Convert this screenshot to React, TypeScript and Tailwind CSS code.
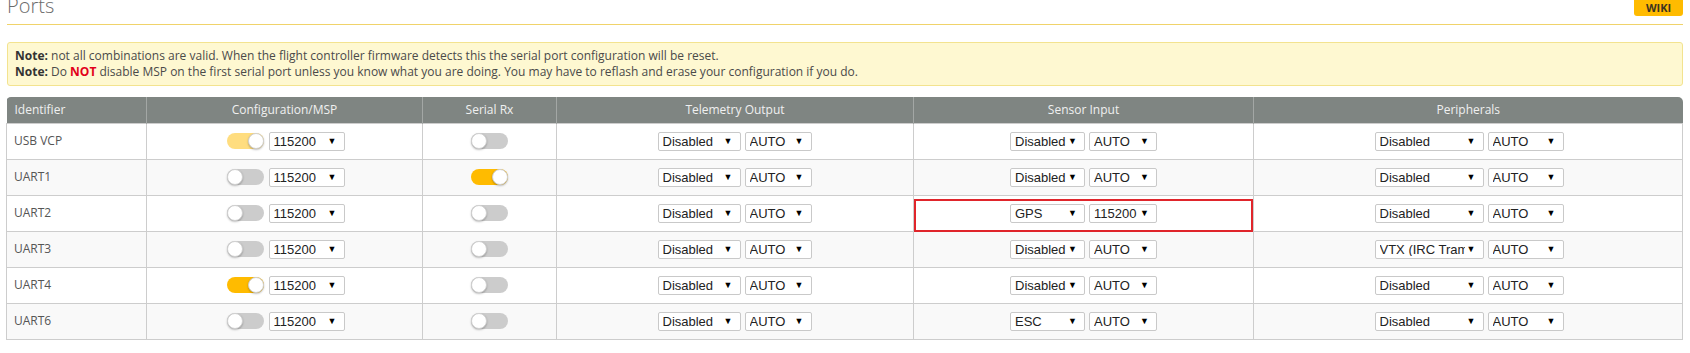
import React from "react";

type Sel = { text: string; w: string };

const Select = ({ text, w }: Sel) => (
  <div
    className={`inline-flex h-[19px] items-center rounded-[2px] border border-[#c9c9c9] bg-white pl-[4px] pr-[7px] text-[13px] leading-none text-[#222] ${w}`}
    style={{ fontFamily: '"Liberation Sans", Arial, sans-serif' }}
  >
    <span className="flex-1 overflow-hidden whitespace-nowrap">{text}</span>
    <span className="ml-[2px] text-[9px] text-black">▼</span>
  </div>
);

const Toggle = ({ on, faded }: { on?: boolean; faded?: boolean }) => (
  <div
    className={`relative h-[16px] w-[37px] rounded-full ${
      on ? (faded ? "bg-[#ffdd7f]" : "bg-[#ffbb00]") : "bg-[#cccccc]"
    }`}
  >
    <div
      className={`absolute top-0 h-[16px] w-[16px] rounded-full border border-[#d0d0d0] bg-white shadow-[0_1px_2px_rgba(0,0,0,0.25)] ${
        on ? "right-0" : "left-0"
      }`}
    />
  </div>
);

type Row = {
  id: string;
  msp: boolean;
  mspFaded?: boolean;
  rx: boolean;
  sensor: [string, string];
  periph: string;
  mark?: boolean;
};

const rows: Row[] = [
  { id: "USB VCP", msp: true, mspFaded: true, rx: false, sensor: ["Disabled", "AUTO"], periph: "Disabled" },
  { id: "UART1", msp: false, rx: true, sensor: ["Disabled", "AUTO"], periph: "Disabled" },
  { id: "UART2", msp: false, rx: false, sensor: ["GPS", "115200"], periph: "Disabled", mark: true },
  { id: "UART3", msp: false, rx: false, sensor: ["Disabled", "AUTO"], periph: "VTX (IRC Tramp)" },
  { id: "UART4", msp: true, rx: false, sensor: ["Disabled", "AUTO"], periph: "Disabled" },
  { id: "UART6", msp: false, rx: false, sensor: ["ESC", "AUTO"], periph: "Disabled" },
];

export default function App() {
  return (
    <div
      className="h-[353px] w-[1690px] overflow-hidden bg-white"
      style={{ fontFamily: '"Open Sans", "Noto Sans", sans-serif' }}
    >
      {/* title bar */}
      <div className="mx-[7px] flex h-[25px] items-start justify-between border-b border-[#f0d36a]">
        <div className="mt-[-4px] text-[20px] font-light leading-[20px] text-[#6b6b6b]">Ports</div>
        <div className="mt-[-3px] flex h-[19px] w-[49px] items-center justify-center rounded-[3px] bg-[#ffbb00] pt-[3px] text-[11px] font-bold text-[#3d3520]">
          WIKI
        </div>
      </div>

      {/* notes */}
      <div className="mx-[7px] mt-[17px] rounded-[3px] border border-[#f3e38f] bg-[#fef8d1] px-[7px] py-[5px] text-[12px] leading-[16px] text-[#4a4a4a]">
        <div>
          <b className="text-[#333]">Note:</b> not all combinations are valid. When the flight controller firmware detects this the serial port configuration will be reset.
        </div>
        <div>
          <b className="text-[#333]">Note:</b> Do <b className="text-[#e2001a]">NOT</b> disable MSP on the first serial port unless you know what you are doing. You may have to reflash and erase your configuration if you do.
        </div>
      </div>

      {/* ports table */}
      <div className="ml-[6px] mr-[7px] mt-[11px] overflow-hidden rounded-t-[5px]">
        <table className="w-full table-fixed border-collapse text-[12px]">
          <colgroup>
            <col className="w-[140px]" />
            <col className="w-[276px]" />
            <col className="w-[134px]" />
            <col className="w-[357px]" />
            <col className="w-[340px]" />
            <col />
          </colgroup>
          <thead>
            <tr className="h-[26px] bg-[#7f8582] text-[#f0f0f0]">
              <th className="pl-[8px] text-left font-normal">Identifier</th>
              <th className="border-l border-[#a3a7a5] font-normal">Configuration/MSP</th>
              <th className="border-l border-[#a3a7a5] font-normal">Serial Rx</th>
              <th className="border-l border-[#a3a7a5] font-normal">Telemetry Output</th>
              <th className="border-l border-[#a3a7a5] font-normal">Sensor Input</th>
              <th className="border-l border-[#a3a7a5] font-normal">Peripherals</th>
            </tr>
          </thead>
          <tbody>
            {rows.map((r, i) => (
              <tr key={r.id} className={`h-[36px] ${i % 2 === 1 ? "bg-[#f9f9f9]" : "bg-white"}`}>
                <td className="border border-[#cdcdcd] pl-[7px] text-[#555]">{r.id}</td>
                <td className="border border-[#cdcdcd]">
                  <div className="flex items-center justify-center gap-[5px] pl-[2px]">
                    <Toggle on={r.msp} faded={r.mspFaded} />
                    <Select text="115200" w="w-[76px]" />
                  </div>
                </td>
                <td className="border border-[#cdcdcd]">
                  <div className="flex justify-center">
                    <Toggle on={r.rx} />
                  </div>
                </td>
                <td className="border border-[#cdcdcd]">
                  <div className="flex items-center justify-center gap-[4px] pr-[1px]">
                    <Select text="Disabled" w="w-[83px]" />
                    <Select text="AUTO" w="w-[67px]" />
                  </div>
                </td>
                <td className="relative border border-[#cdcdcd]">
                  <div className="flex items-center justify-center gap-[4px]">
                    <Select text={r.sensor[0]} w="w-[75px]" />
                    <Select text={r.sensor[1]} w="w-[68px]" />
                  </div>
                  {r.mark && (
                    <div className="absolute bottom-[-1px] left-0 right-0 top-[3px] border-2 border-[#e0252b]" />
                  )}
                </td>
                <td className="border border-[#cdcdcd]">
                  <div className="flex items-center justify-center gap-[4px] pl-[2px]">
                    <Select text={r.periph} w="w-[109px]" />
                    <Select text="AUTO" w="w-[76px]" />
                  </div>
                </td>
              </tr>
            ))}
          </tbody>
        </table>
      </div>
    </div>
  );
}
